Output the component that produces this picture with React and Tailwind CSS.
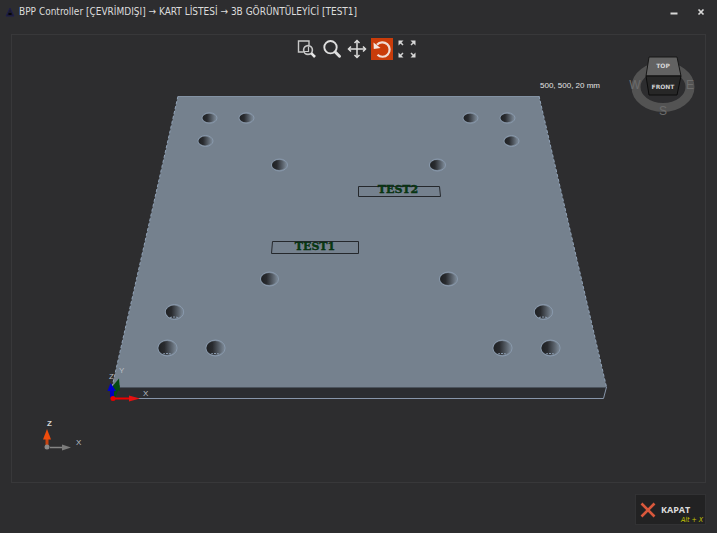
import React, { useState } from 'react';

const holes = [
  { x: 209, y: 118, rx: 6.5, ry: 4.2 },
  { x: 246, y: 118, rx: 6.5, ry: 4.2 },
  { x: 205, y: 141, rx: 6.5, ry: 4.4 },
  { x: 279, y: 165, rx: 7, ry: 5 },
  { x: 470, y: 118, rx: 6.5, ry: 4.2 },
  { x: 507, y: 118, rx: 6.5, ry: 4.2 },
  { x: 511, y: 141, rx: 6.5, ry: 4.4 },
  { x: 437, y: 165, rx: 7, ry: 5 },
  { x: 269, y: 279, rx: 8, ry: 6 },
  { x: 448, y: 279, rx: 8, ry: 6 },
  { x: 174, y: 312, rx: 8.2, ry: 6.5 },
  { x: 543, y: 312, rx: 8.2, ry: 6.5 },
  { x: 167, y: 348, rx: 8.6, ry: 7 },
  { x: 215, y: 348, rx: 8.6, ry: 7 },
  { x: 502, y: 348, rx: 8.6, ry: 7 },
  { x: 550, y: 348, rx: 8.6, ry: 7 },
];

const ZoomWindowIcon = () => (
  <svg viewBox="0 0 20 20" className="h-5 w-5" fill="none" stroke="#c8c8c8">
    <path d="M6.500 13H1.500V2H12v4" strokeWidth="1.400" />
    <path d="M11.500 7.500v5h-5" strokeWidth="1.200" />
    <circle cx="11" cy="11" r="4.400" strokeWidth="1.600" />
    <path d="M14.200 14.200L18 18" strokeWidth="2.600" stroke="#e6e6e6" />
  </svg>
);

const ZoomIcon = () => (
  <svg viewBox="0 0 20 20" className="h-5 w-5" fill="none" stroke="#dedede">
    <circle cx="8.500" cy="8.200" r="6.200" strokeWidth="1.900" />
    <path d="M13.200 13L17.500 17.200" strokeWidth="3" strokeLinecap="round" />
  </svg>
);

const PanIcon = () => (
  <svg viewBox="0 0 20 20" className="h-5 w-5" fill="none" stroke="#dedede" strokeWidth="1.500">
    <path d="M10 2v16M2 10h16" />
    <path d="M7.500 4L10 1.500 12.500 4M7.500 16l2.500 2.500 2.500-2.500M4 7.500L1.500 10 4 12.500M16 7.500l2.500 2.500-2.500 2.500" />
  </svg>
);

const RotateIcon = () => (
  <svg viewBox="0 0 20 20" className="h-5 w-5" fill="none" stroke="#f0dcd4">
    <path d="M5 5.800A7.200 7.200 0 1 1 5.500 15.800" strokeWidth="2.200" />
    <path d="M1.500 3.500L1.800 10 8.500 9z" fill="#f4e6e0" stroke="none" />
  </svg>
);

const FitIcon = () => (
  <svg viewBox="0 0 20 20" className="h-5 w-5" fill="none" stroke="#d0d0d0" strokeWidth="1.500">
    <path d="M3 3l3 3M17 3l-3 3M3 17l3-3M17 17l-3-3" />
    <path d="M1.500 1.500h5l-5 5zM18.500 1.500v5l-5-5zM1.500 18.500v-5l5 5zM18.500 18.500h-5l5-5z" fill="#d8d8d8" stroke="none" />
  </svg>
);

const tools = [
  { id: 'window', label: 'Pencere yakınlaştır', Icon: ZoomWindowIcon },
  { id: 'zoom', label: 'Yakınlaştır', Icon: ZoomIcon },
  { id: 'pan', label: 'Kaydır', Icon: PanIcon },
  { id: 'rotate', label: 'Döndür', Icon: RotateIcon },
  { id: 'fit', label: 'Sığdır', Icon: FitIcon },
];

function Toolbar() {
  const [active, setActive] = useState('rotate');

  return (
    <div className="absolute inset-x-0 top-0 flex justify-center gap-[3px] pt-[3px] pr-1">
      {tools.map(({ id, label, Icon }) => (
        <button
          key={id}
          aria-label={label}
          onClick={() => setActive(id)}
          className={`flex h-[22px] w-[22px] items-center justify-center ${
            active === id ? 'bg-[#c93c0a]' : ''
          }`}
        >
          <Icon />
        </button>
      ))}
    </div>
  );
}

function ViewCube() {
  return (
    <g fontFamily="'Liberation Sans', Arial, sans-serif" textAnchor="middle">
      <ellipse cx="663" cy="87" rx="27" ry="20.500" fill="none" stroke="#535353" strokeWidth="9" />
      <g fontSize="12" fill="#6c6c6c">
        <text x="635" y="89">W</text>
        <text x="690" y="89">E</text>
        <text x="663" y="115">S</text>
      </g>
      <path d="M649 57h28l4 19h-35z" fill="#626262" stroke="#161616" />
      <path d="M646 76h35l-4 19h-28z" fill="#272727" stroke="#0c0c0c" />
      <g fontSize="6" fontWeight="bold" fontFamily="'DejaVu Sans', sans-serif">
        <text x="663" y="68" fill="#d8d8d8">TOP</text>
        <text x="663" y="89" fill="#d0d0d0">FRONT</text>
      </g>
    </g>
  );
}

function Scene() {
  return (
    <svg viewBox="12 35 693 447" className="block h-auto w-full" role="img" aria-label="TEST1">
      <defs>
        <linearGradient id="bore">
          <stop offset="0.050" stopColor="#202225" />
          <stop offset="0.350" stopColor="#292b2f" />
          <stop offset="1" stopColor="#76828f" />
        </linearGradient>
      </defs>

      {/* plate */}
      <path d="M112 387H606.500L603.500 398.500H112z" fill="#2b2d31" stroke="#8796aa" />
      <path d="M178 96H539L606.500 387H112z" fill="#75818e" />
      <path d="M178 96.500H539" stroke="#8392a3" />
      <path d="M112 387L178 96M539 96L606.500 387" stroke="#91a3b8" strokeDasharray="3 2" />
      <path d="M112 387.500H606" stroke="#4b535d" />

      {holes.map((h) => (
        <g key={`${h.x}-${h.y}`}>
          <ellipse cx={h.x + 0.5} cy={h.y} rx={h.rx + 1} ry={h.ry + 1} fill="#75818e" stroke="#8b9cb0" strokeWidth="0.900" />
          <ellipse cx={h.x} cy={h.y} rx={h.rx} ry={h.ry} fill="url(#bore)" />
          {h.ry > 6 && (
            <path d={`M${h.x - 4} ${h.y + h.ry - 1}q4 -1 8 0`} fill="none" stroke="#8b9cb0" strokeDasharray="2 1" />
          )}
        </g>
      ))}

      {/* engraved labels */}
      <g fill="none" stroke="#25282c">
        <path d="M358.500 186.500H439.500L440.500 196.500H358.500z" />
        <path d="M272.500 241.500H358.500V253.500H271.500z" />
      </g>
      <g
        fontFamily="'DejaVu Serif', serif"
        fontSize="11"
        fontWeight="bold"
        fill="#073d12"
        stroke="#082a10"
        strokeWidth="0.400"
        textAnchor="middle"
      >
        <text x="398" y="193">TEST2</text>
        <text x="315" y="250">TEST1</text>
      </g>

      {/* origin axes */}
      <path d="M113 398L118 385" stroke="#064a12" strokeWidth="4" />
      <path d="M111 388L119 378.500 120 391z" fill="#064a12" />
      <path d="M112 397V388" stroke="#0000b8" strokeWidth="4" />
      <path d="M107.500 391L110.500 383 116 391z" fill="#0000c8" />
      <path d="M113 398.500H130" stroke="#f00000" strokeWidth="2" />
      <path d="M129 395.500L140 398.500 129 401.500z" fill="#e51212" />
      <circle cx="113" cy="398.500" r="2.500" fill="#e80000" />

      <g fontFamily="'Liberation Sans', Arial, sans-serif" fontSize="8" fill="#b9bec4">
        <text x="109" y="379">Z</text>
        <text x="119" y="373">Y</text>
        <text x="143" y="396">X</text>
        <text x="76" y="445">X</text>
        <text x="47" y="426" fontWeight="bold" fill="#d5d5d5">Z</text>
      </g>

      {/* corner axes */}
      <path d="M50 447.500H64" stroke="#858585" strokeWidth="1.500" />
      <path d="M62 444.500L71 447.500 62 450.500z" fill="#7b7b7b" />
      <path d="M47 446V436" stroke="#c94310" strokeWidth="3" />
      <path d="M43 439.500L47 429 51 439.500z" fill="#ee4c0c" />
      <circle cx="47" cy="447" r="2.500" fill="#8a8a8a" />

      <text x="540" y="88" fontFamily="'Liberation Sans', Arial, sans-serif" fontSize="8" fill="#e4e4e4">
        500, 500, 20 mm
      </text>

      <ViewCube />
    </svg>
  );
}

export default function App() {
  return (
    <div className="flex min-h-screen flex-col bg-[#2d2d2f] font-['DejaVu_Sans_Condensed','DejaVu_Sans',sans-serif] text-[#dcdcdc]">
      <header className="flex h-6 items-center gap-1 px-[5px]">
        <svg viewBox="0 0 10 10" className="h-2.5 w-2.5">
          <path d="M5 1L9 9H1z" fill="#1b1b2c" stroke="#1d1d4c" />
          <path d="M3.500 7h3" stroke="#050509" strokeWidth="2" />
        </svg>
        <h1 className="flex-1 truncate text-[10px] leading-4">
          BPP Controller [ÇEVRİMDIŞI] → KART LİSTESİ → 3B GÖRÜNTÜLEYİCİ [TEST1]
        </h1>
        <div className="flex gap-[7px] pr-px">
          <button aria-label="Küçült" className="flex h-5 w-5 items-center justify-center">
            <svg viewBox="0 0 10 10" className="h-2.5 w-2.5">
              <path d="M1.500 6.500h7" stroke="#d8d8d8" strokeWidth="2" />
            </svg>
          </button>
          <button aria-label="Pencereyi kapat" className="flex h-5 w-5 items-center justify-center">
            <svg viewBox="0 0 10 10" className="h-2.5 w-2.5">
              <path d="M2.500 2.500l5 5M7.500 2.500l-5 5" stroke="#d8d8d8" strokeWidth="1.700" />
            </svg>
          </button>
        </div>
      </header>

      <main className="relative mx-[11px] mt-[10px] border border-[#38383a]">
        <Scene />
        <Toolbar />
      </main>

      <footer className="mt-auto flex justify-end px-[11px] pb-2">
        <button className="relative flex h-[31px] w-[71px] items-center gap-[5px] border border-[#323234] bg-[#222223] pl-1">
          <svg viewBox="0 0 16 16" className="h-4 w-4" fill="none" stroke="#d9583c" strokeWidth="2.600">
            <path d="M1.500 1.500l13 13M14.500 1.500l-13 13" />
          </svg>
          <span className="text-[9px] font-bold leading-4 font-['Open_Sans',sans-serif]">KAPAT</span>
          <span className="absolute right-0.5 bottom-0 text-[7px] italic leading-2 text-[#c8c800]">Alt + X</span>
        </button>
      </footer>
    </div>
  );
}
